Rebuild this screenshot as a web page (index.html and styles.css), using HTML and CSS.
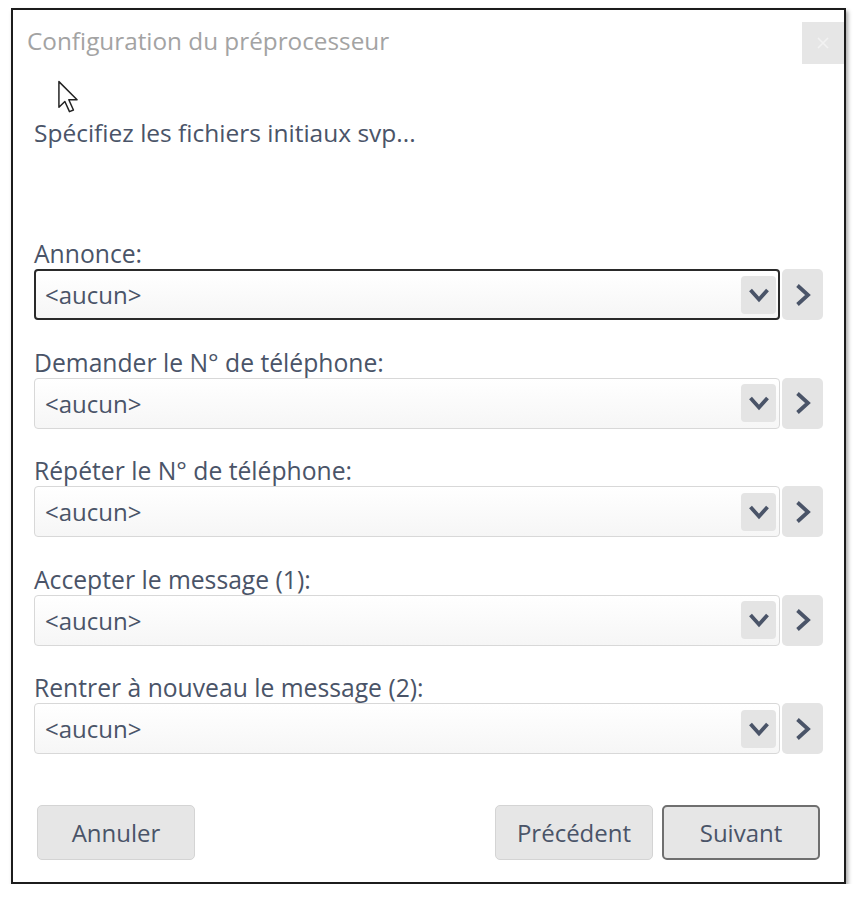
FILE: index.html
```html
<!DOCTYPE html>
<html lang="fr">
<head>
<meta charset="utf-8">
<title>Configuration du préprocesseur</title>
<link rel="stylesheet" href="styles.css">
</head>
<body>
<div class="dialog">
  <div class="header">
    <div class="title">Configuration du préprocesseur</div>
    <div class="close"><svg width="14" height="14" viewBox="0 0 14 14"><path d="M2 2 L12 12 M12 2 L2 12" stroke="#f2f2f2" stroke-width="1.6"/></svg></div>
  </div>
  <svg class="cursor" width="22" height="33" viewBox="0 0 13 20"><path d="M1 1 L1 16.5 L4.6 13 L7.4 19.2 L9.8 18.2 L7 12 L12 12 Z" fill="#fff" stroke="#222" stroke-width="0.9" stroke-linejoin="round"/></svg>
  <div class="body">
    <div class="subtitle">Spécifiez les fichiers initiaux svp...</div>
    <div class="fields">
      <div class="field">
        <div class="label">Annonce:</div>
        <div class="row">
          <div class="combo focused"><span class="value">&lt;aucun&gt;</span><span class="drop"><svg width="24" height="16" viewBox="0 0 24 16"><path d="M3.5 3 L12 12.5 L20.5 3" fill="none" stroke="#4a5468" stroke-width="3.8"/></svg></span></div>
          <div class="next"><svg width="18" height="26" viewBox="0 0 18 26"><path d="M3.5 3.5 L14 13 L3.5 22.5" fill="none" stroke="#4a5468" stroke-width="3.8"/></svg></div>
        </div>
      </div>
      <div class="field">
        <div class="label">Demander le N° de téléphone:</div>
        <div class="row">
          <div class="combo"><span class="value">&lt;aucun&gt;</span><span class="drop"><svg width="24" height="16" viewBox="0 0 24 16"><path d="M3.5 3 L12 12.5 L20.5 3" fill="none" stroke="#4a5468" stroke-width="3.8"/></svg></span></div>
          <div class="next"><svg width="18" height="26" viewBox="0 0 18 26"><path d="M3.5 3.5 L14 13 L3.5 22.5" fill="none" stroke="#4a5468" stroke-width="3.8"/></svg></div>
        </div>
      </div>
      <div class="field">
        <div class="label">Répéter le N° de téléphone:</div>
        <div class="row">
          <div class="combo"><span class="value">&lt;aucun&gt;</span><span class="drop"><svg width="24" height="16" viewBox="0 0 24 16"><path d="M3.5 3 L12 12.5 L20.5 3" fill="none" stroke="#4a5468" stroke-width="3.8"/></svg></span></div>
          <div class="next"><svg width="18" height="26" viewBox="0 0 18 26"><path d="M3.5 3.5 L14 13 L3.5 22.5" fill="none" stroke="#4a5468" stroke-width="3.8"/></svg></div>
        </div>
      </div>
      <div class="field">
        <div class="label">Accepter le message (1):</div>
        <div class="row">
          <div class="combo"><span class="value">&lt;aucun&gt;</span><span class="drop"><svg width="24" height="16" viewBox="0 0 24 16"><path d="M3.5 3 L12 12.5 L20.5 3" fill="none" stroke="#4a5468" stroke-width="3.8"/></svg></span></div>
          <div class="next"><svg width="18" height="26" viewBox="0 0 18 26"><path d="M3.5 3.5 L14 13 L3.5 22.5" fill="none" stroke="#4a5468" stroke-width="3.8"/></svg></div>
        </div>
      </div>
      <div class="field">
        <div class="label">Rentrer à nouveau le message (2):</div>
        <div class="row">
          <div class="combo"><span class="value">&lt;aucun&gt;</span><span class="drop"><svg width="24" height="16" viewBox="0 0 24 16"><path d="M3.5 3 L12 12.5 L20.5 3" fill="none" stroke="#4a5468" stroke-width="3.8"/></svg></span></div>
          <div class="next"><svg width="18" height="26" viewBox="0 0 18 26"><path d="M3.5 3.5 L14 13 L3.5 22.5" fill="none" stroke="#4a5468" stroke-width="3.8"/></svg></div>
        </div>
      </div>
    </div>
  </div>
  <div class="footer">
    <button class="btn">Annuler</button>
    <div class="nav">
      <button class="btn">Précédent</button>
      <button class="btn primary">Suivant</button>
    </div>
  </div>
</div>
</body>
</html>
```

FILE: styles.css
```css
html, body {
  margin: 0;
  padding: 0;
  background: #ffffff;
}

body {
  font-family: "Open Sans", "Noto Sans", "Liberation Sans", sans-serif;
  color: #4a5468;
}

.dialog {
  position: relative;
  margin: 8px 0 0 11px;
  width: 835px;
  height: 876px;
  box-sizing: border-box;
  border: 2px solid #1c1c1c;
  box-shadow: 2px 3px 4px rgba(0, 0, 0, 0.35);
  background: #ffffff;
  display: flex;
  flex-direction: column;
}

.header {
  display: flex;
  justify-content: space-between;
  align-items: flex-start;
  padding: 12px 0 0 14px;
}

.title {
  font-size: 24.3px;
  line-height: 30px;
  padding-top: 4px;
  color: #a3a3a3;
}

.close {
  width: 42px;
  height: 42px;
  background: #e6e6e6;
  display: flex;
  align-items: center;
  justify-content: center;
}

.cursor {
  position: absolute;
  left: 44px;
  top: 70px;
}

.body {
  padding: 0 21px;
}

.subtitle {
  font-size: 24.5px;
  line-height: 32px;
  margin-top: 53px;
}

.fields {
  margin-top: 90px;
  display: flex;
  flex-direction: column;
  gap: 27.5px;
}

.label {
  font-size: 24.7px;
  line-height: 30px;
  height: 30px;
}

.row {
  display: flex;
  gap: 2px;
  height: 51px;
}

.combo {
  flex: 1;
  box-sizing: border-box;
  border: 1px solid #d8d8d8;
  border-radius: 4px;
  background: linear-gradient(#ffffff, #f6f6f6);
  display: flex;
  align-items: center;
  justify-content: space-between;
  padding: 0 3px 0 10px;
}

.combo.focused {
  border: 2px solid #2a2a2a;
  padding: 0 2px 0 9px;
}

.value {
  font-size: 24px;
}

.drop {
  width: 35px;
  height: 38px;
  border-radius: 4px;
  background: #e4e4e4;
  display: flex;
  align-items: center;
  justify-content: center;
}

.next {
  width: 41px;
  border-radius: 5px;
  background: #e4e4e4;
  display: flex;
  align-items: center;
  justify-content: center;
}

.footer {
  margin-top: auto;
  display: flex;
  justify-content: space-between;
  padding: 0 24px 22px 24px;
}

.nav {
  display: flex;
  gap: 9px;
}

.btn {
  width: 158px;
  height: 55px;
  box-sizing: border-box;
  border: 1px solid #d4d4d4;
  border-radius: 5px;
  background: #e6e6e6;
  font-family: "Open Sans", "Noto Sans", "Liberation Sans", sans-serif;
  font-size: 24px;
  color: #4a5468;
  padding: 0;
}

.btn.primary {
  border: 2px solid #6f6f6f;
}
```
